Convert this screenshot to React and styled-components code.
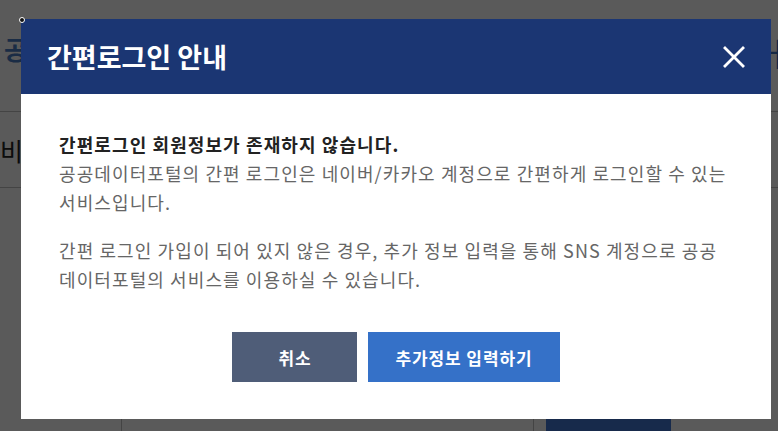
import React from "react";
import styled, { createGlobalStyle } from "styled-components";

const GlobalStyle = createGlobalStyle`
  html, body {
    margin: 0;
    padding: 0;
    background: #ffffff;
    font-family: "Noto Sans CJK KR", "Noto Sans", sans-serif;
  }
`;

const Page = styled.div`
  position: relative;
  width: 778px;
  height: 431px;
  overflow: hidden;
`;

// page behind the dim layer
const TopBar = styled.header`
  height: 112px;
  display: flex;
  justify-content: space-between;
  align-items: flex-start;
  padding: 30px 0 0 4px;
  box-sizing: border-box;
  border-bottom: 1px solid #c1c1c1;
`;

const Logo = styled.div`
  font-size: 26px;
  font-weight: 700;
  color: #4a7dc4;
`;

const TopRight = styled.div`
  font-size: 32px;
  font-weight: 400;
  color: #3c6fc0;
  margin-right: -12px;
  line-height: 1;
  padding-top: 6px;
`;

const SubRow = styled.div`
  height: 75px;
  display: flex;
  align-items: center;
  border-bottom: 1px solid #c1c1c1;
  font-size: 25px;
  color: #222;
`;

const Content = styled.div`
  display: grid;
  grid-template-columns: 121px 412px 13px 125px 1fr;
  margin-top: 170px;
  height: 80px;
`;

const Cell = styled.div`
  border-left: ${(p) => (p.$line ? "1px solid #c1c1c1" : "none")};
`;

const NavyBlock = styled.div`
  background: #4177d4;
  height: 60px;
  margin-top: 20px;
`;

const Dim = styled.div`
  position: absolute;
  inset: 0;
  background: rgba(0, 0, 0, 0.647);
`;

const Handle = styled.span`
  position: absolute;
  left: 18px;
  top: 16px;
  width: 4px;
  height: 4px;
  border-radius: 50%;
  background: #111;
  border: 1px solid #fff;
  z-index: 2;
  transform: translate(1px, 1px);
`;

// modal
const Modal = styled.div`
  position: absolute;
  top: 19px;
  left: 21px;
  width: 750px;
  background: #ffffff;
  display: flex;
  flex-direction: column;
`;

const ModalHead = styled.div`
  height: 75px;
  background: #1b3673;
  display: flex;
  align-items: center;
  justify-content: space-between;
  padding: 0 26px;
`;

const Title = styled.h2`
  margin: 0;
  color: #ffffff;
  font-size: 27px;
  font-weight: 700;
  letter-spacing: 0;
`;

const CloseBtn = styled.button`
  border: 0;
  background: none;
  padding: 0;
  width: 22px;
  height: 22px;
  display: flex;
  cursor: pointer;
`;

const ModalBody = styled.div`
  padding: 36px 20px 37px 38px;
`;

const Text = styled.p`
  margin: 0 0 ${(p) => p.$gap || 0}px;
  font-size: 18px;
  line-height: 29px;
  color: #666666;
  letter-spacing: 1.1px;
`;

const Strong = styled.strong`
  color: #222222;
  font-weight: 700;
`;

const Buttons = styled.div`
  display: flex;
  justify-content: center;
  gap: 11px;
  margin-top: 38px;
  margin-left: -18px;
`;

const Btn = styled.button`
  height: 50px;
  min-width: 125px;
  padding: 0 27px;
  border: 0;
  font-family: inherit;
  font-size: 17px;
  font-weight: 700;
  letter-spacing: 0.9px;
  color: #ffffff;
  background: ${(p) => (p.$primary ? "#3571c8" : "#4f5d78")};
  cursor: pointer;
`;

export default function App() {
  return (
    <Page>
      <GlobalStyle />
      <TopBar>
        <Logo>공</Logo>
        <TopRight>ㅓ</TopRight>
      </TopBar>
      <SubRow>비밀</SubRow>
      <Content>
        <Cell />
        <Cell $line />
        <Cell $line />
        <NavyBlock />
        <Cell />
      </Content>

      <Dim />
      <Handle />

      <Modal>
        <ModalHead>
          <Title>간편로그인 안내</Title>
          <CloseBtn aria-label="닫기">
            <svg width="22" height="22" viewBox="0 0 22 22">
              <path d="M2 2 L20 20 M20 2 L2 20" stroke="#fff" strokeWidth="2.8" strokeLinecap="square" />
            </svg>
          </CloseBtn>
        </ModalHead>
        <ModalBody>
          <Text $gap={19}>
            <Strong>간편로그인 회원정보가 존재하지 않습니다.</Strong>
            <br />
            공공데이터포털의 간편 로그인은 네이버/카카오 계정으로 간편하게 로그인할 수 있는
            <br />
            서비스입니다.
          </Text>
          <Text>
            간편 로그인 가입이 되어 있지 않은 경우, 추가 정보 입력을 통해 SNS 계정으로 공공
            <br />
            데이터포털의 서비스를 이용하실 수 있습니다.
          </Text>
          <Buttons>
            <Btn>취소</Btn>
            <Btn $primary>추가정보 입력하기</Btn>
          </Buttons>
        </ModalBody>
      </Modal>
    </Page>
  );
}
